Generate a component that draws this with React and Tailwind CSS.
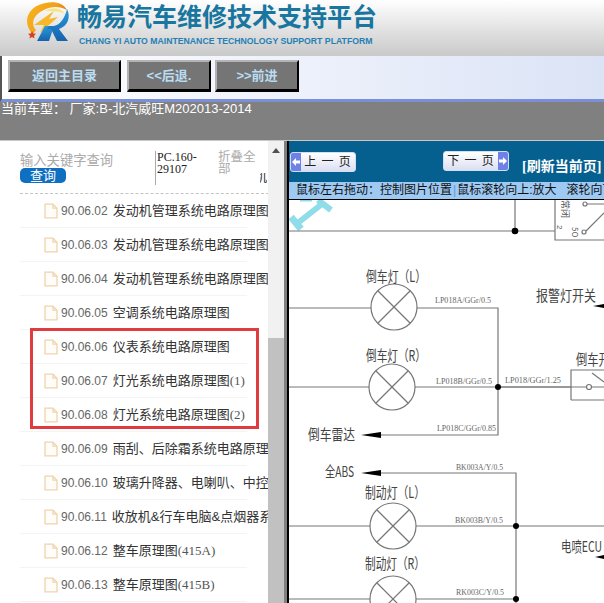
import React from 'react'

const cjk = 'font-["Liberation_Sans","Noto_Sans_CJK_SC",sans-serif]'

const rows = [
  ['90.06.02', '发动机管理系统电路原理图'],
  ['90.06.03', '发动机管理系统电路原理图'],
  ['90.06.04', '发动机管理系统电路原理图'],
  ['90.06.05', '空调系统电路原理图'],
  ['90.06.06', '仪表系统电路原理图'],
  ['90.06.07', '灯光系统电路原理图', '(1)'],
  ['90.06.08', '灯光系统电路原理图', '(2)'],
  ['90.06.09', '雨刮、后除霜系统电路原理图'],
  ['90.06.10', '玻璃升降器、电喇叭、中控锁系统'],
  ['90.06.11', '收放机&行车电脑&点烟器系统'],
  ['90.06.12', '整车原理图', '(415A)'],
  ['90.06.13', '整车原理图', '(415B)'],
]

function FileIcon() {
  return (
    <svg width="14" height="16" viewBox="0 0 14 16" className="shrink-0" fill="#fffdf9" stroke="#f0d3ac" strokeWidth="1.3">
      <path d="M1 1.2h8l4 4v9.6H1z" />
      <path d="M9 1.2v4h4" fill="none" />
    </svg>
  )
}

function Logo() {
  return (
    <svg width="46" height="42" viewBox="0 0 46 42" className="shrink-0">
      <defs>
        <linearGradient id="ring" x1="0" y1="0.2" x2="1" y2="0.6">
          <stop offset="0" stopColor="#f5b21e" />
          <stop offset="0.6" stopColor="#f3a019" />
          <stop offset="1" stopColor="#e2660f" />
        </linearGradient>
        <linearGradient id="arm" x1="0" y1="0" x2="0" y2="1">
          <stop offset="0" stopColor="#2a9bdc" />
          <stop offset="1" stopColor="#1562ad" />
        </linearGradient>
      </defs>
      <path d="M8 32C-2 23 1 8 14 3 26-2 38 0 42 8 35 4 25 4 17 9 9 13 5 22 11 28z" fill="url(#ring)" />
      <path d="M9 23 29 9 24 17 33 15 15 31 19 23z" fill="#f7b92a" />
      <path d="M20 9C28 5 36 6 40 12 35 9 27 9 20 9z" fill="#fbe27c" />
      <path d="M7 29l1.200 2.500 2.800.3-2 1.900.5 2.800-2.500-1.400-2.500 1.400.5-2.800-2-1.900 2.800-.3z" fill="#d8401f" />
      <path d="M12 39 20 24H29L24 39z" fill="url(#arm)" />
      <path d="M42 7C46 15 43 24 34 27L43 39H32L26 27H22L24 24H29C35 23 40 16 42 7z" fill="url(#arm)" />
    </svg>
  )
}

function Lamp({ x, y }) {
  const d = 16
  return (
    <g>
      <circle cx={x} cy={y} r="23" fill="#fff" />
      <line x1={x - d} y1={y - d} x2={x + d} y2={y + d} />
      <line x1={x - d} y1={y + d} x2={x + d} y2={y - d} />
    </g>
  )
}

function Label({ x, y, w, size = 15, children }) {
  return (
    <text x={x} y={y} textLength={w} lengthAdjust="spacingAndGlyphs" fontSize={size} fill="#444" stroke="none" fontFamily="'Noto Sans CJK SC', sans-serif">
      {children}
    </text>
  )
}

function Wire({ x, y, w, children }) {
  return (
    <text x={x} y={y} textLength={w} lengthAdjust="spacingAndGlyphs" fontSize="9" fill="#666" stroke="none" fontFamily="'Liberation Serif', serif">
      {children}
    </text>
  )
}

function Diagram() {
  return (
    <svg viewBox="289 199 315 404" className="block w-[315px] h-[404px]" fill="none" stroke="#777" strokeWidth="1.200">
      {/* cyan part of the drawing that is cut by the top edge */}
      <g stroke="#8fdde8" strokeWidth="6">
        <path d="M291 216 301 228" strokeWidth="7" />
        <path d="M299 221 322 203" />
        <path d="M318 199 331 209" />
        <path d="M300 199H312" strokeWidth="3" />
      </g>
      <path d="M289 230H555M515 199V230" />
      <path d="M555 199V239H604" />
      <circle cx="515" cy="230" r="3.300" fill="#000" stroke="none" />
      <circle cx="585" cy="203" r="2" fill="#fff" />
      <circle cx="584" cy="231" r="2" fill="#fff" />
      <path d="M586 230 604 212M587 203H604" />
      <text transform="translate(562 199) rotate(90)" fontSize="9" fill="#555" stroke="none" fontFamily="'Noto Sans CJK SC', sans-serif">常闭</text>
      <text transform="translate(572 226) rotate(90)" fontSize="8" fill="#555" stroke="none" fontFamily="'Noto Sans CJK SC', sans-serif">5O</text>
      <text transform="translate(557 224) rotate(90)" fontSize="8" fill="#555" stroke="none">2</text>

      <path d="M289 307H371M417 307H498V434H381M498 386H571" />
      <path d="M289 386H369M415 386H586M589 386H604" />
      <Lamp x={394} y={306} />
      <Lamp x={392} y={386} />
      <path d="M571 399V369H604M571 399H604" />
      <circle cx="589" cy="386" r="2.500" fill="#fff" />
      <path d="M592 372 604 381" />
      <circle cx="498" cy="386" r="3" fill="#000" stroke="none" />
      <path d="M361 434 381 431V437z" fill="#000" stroke="none" />
      <path d="M593 305 604 303V307z" fill="#000" stroke="none" />

      <Label x={366} y={281} w={60}>倒车灯（L）</Label>
      <Label x={366} y={360} w={60}>倒车灯（R）</Label>
      <Label x={308} y={439} w={47}>倒车雷达</Label>
      <Label x={536} y={300} w={60}>报警灯开关</Label>
      <Label x={576} y={364} w={45}>倒车开关</Label>
      <Wire x={435} y={302} w={56}>LP018A/GGr/0.5</Wire>
      <Wire x={436} y={383} w={56}>LP018B/GGr/0.5</Wire>
      <Wire x={505} y={382} w={56}>LP018/GGr/1.25</Wire>
      <Wire x={437} y={430} w={59}>LP018C/GGr/0.85</Wire>

      <path d="M381 472H516V603M289 525H370M416 525H604M289 598H370M416 598H516" />
      <Lamp x={393} y={525} />
      <Lamp x={393} y={598} />
      <circle cx="516" cy="525" r="3" fill="#000" stroke="none" />
      <circle cx="516" cy="598" r="3" fill="#000" stroke="none" />
      <path d="M361 472 381 469V475z" fill="#000" stroke="none" />
      <path d="M595 556 604 554V558z" fill="#000" stroke="none" />

      <Label x={325} y={476} w={29}>全ABS</Label>
      <Label x={365} y={497} w={60}>制动灯（L）</Label>
      <Label x={365} y={568} w={60}>制动灯（R）</Label>
      <Label x={561} y={551} w={41}>电喷ECU</Label>
      <Wire x={456} y={469} w={47}>BK003A/Y/0.5</Wire>
      <Wire x={455} y={522} w={48}>BK003B/Y/0.5</Wire>
      <Wire x={456} y={594} w={48}>RK003C/Y/0.5</Wire>
    </svg>
  )
}

function NavButton({ children, className }) {
  return (
    <button className={`h-8 flex items-center justify-center bg-[#757575] border-2 border-t-[#b4b4b4] border-l-[#b4b4b4] border-r-black border-b-[3px] border-b-black text-[13px] font-bold text-[#b9dcf3] ${className}`}>
      {children}
    </button>
  )
}

function PageButton({ dir, children, className }) {
  const arrow = (
    <span className="w-[10px] self-stretch bg-[#6f80e6] flex items-center justify-center">
      <svg width="8" height="8" viewBox="0 0 8 8" fill="#fff">
        {dir === 'left' ? <path d="M0 4 4 0V2.500H8V5.500H4V8z" /> : <path d="M8 4 4 0V2.500H0V5.500H4V8z" />}
      </svg>
    </span>
  )
  return (
    <button className={`w-[66px] h-5 flex items-center overflow-hidden rounded-[3px] border border-[#cfe0f6] bg-gradient-to-b from-white to-[#dcdff2] text-[12px] tracking-[1px] text-[#222] ${className}`}>
      {dir === 'left' && arrow}
      <span className="flex-1 text-center">{children}</span>
      {dir === 'right' && arrow}
    </button>
  )
}

export default function App() {
  return (
    <div className={`w-[604px] h-[603px] overflow-hidden flex flex-col bg-[#808080] ${cjk}`}>
      <div className="h-14 shrink-0 flex items-start gap-[6px] pl-[25px] pt-[2px] bg-gradient-to-b from-white to-[#c9c9c9]">
        <Logo />
        <div className="flex flex-col">
          <div className="h-[33px] text-[25px] leading-[31px] font-bold text-[#19769f] whitespace-nowrap">畅易汽车维修技术支持平台</div>
          <div className="text-[8.700px] leading-3 pl-[2px] font-bold text-[#2480b4] whitespace-nowrap">CHANG YI AUTO MAINTENANCE TECHNOLOGY SUPPORT PLATFORM</div>
        </div>
      </div>

      <div className="h-[46px] shrink-0 flex items-start gap-1 pl-2 pt-1 border-b-[3px] border-[#7b8fd6] border-l-2 border-l-[#555] bg-gradient-to-r from-white to-[#dbe3f6]">
        <NavButton className="w-[113px] ml-[-2px]">返回主目录</NavButton>
        <NavButton className="w-[84px] ml-[2px]">&lt;&lt;后退.</NavButton>
        <NavButton className="w-[84px]">&gt;&gt;前进</NavButton>
      </div>

      <div className="h-[38px] shrink-0 pl-px text-[13px] leading-[14px] text-white whitespace-nowrap">当前车型： 厂家:B-北汽威旺M202013-2014</div>

      <div className="flex-1 min-h-0 flex border-t border-[#c8c8c8]">
        <div className="relative w-[268px] shrink-0 bg-white overflow-hidden">
          <div className="h-[53px] ml-5 mr-[-6px] flex items-start border-b border-dashed border-[#c4c4c4]">
            <div className="w-[135px] pt-[13px]">
              <div className="text-[13.300px] leading-[14px] text-[#aaa] whitespace-nowrap">输入关键字查询</div>
              <div className="w-[46px] h-[15px] rounded-[5px] bg-[#0f6fc0] text-white text-[13px] leading-[15px] text-center">查询</div>
            </div>
            <div className="w-[63px] h-[34px] mt-[10px] pl-px border-l border-[#aaa] text-[12px] leading-[11.500px] text-[#222] font-['Liberation_Serif','Noto_Sans_CJK_SC',serif]">
              <div className="pt-px">PC.160-</div>
              <div>29107</div>
            </div>
            <div className="w-[40px] pt-[10px] text-[12.500px] leading-3 text-[#aaa]">折叠全部</div>
            <div className="w-[7px] h-[10px] mt-[32px] ml-[2px] overflow-hidden text-[12px] leading-[10px] text-[#222] [direction:rtl]">机</div>
          </div>

          {rows.map(([code, name, suffix]) => (
            <div key={code} className="h-[34px] w-[227px] ml-5 pl-6 flex items-center border-b border-[#f4f4f4] whitespace-nowrap text-[13px]">
              <FileIcon />
              <span className="ml-[3px] text-[12px] text-[#666]">{code}</span>
              <span className="ml-[5px] text-[#333]">{name}</span>
              {suffix && <span className="text-[#555] font-['Liberation_Serif',serif]">{suffix}</span>}
            </div>
          ))}

          <div className="absolute left-[30px] top-[187px] w-[229px] h-[101px] border-[3px] border-[#e03c40]" />
        </div>

        <div className="w-4 shrink-0 flex flex-col bg-[#f1f1f1]">
          <div className="h-[197px] pt-[7px] flex justify-center">
            <div className="w-0 h-0 border-x-[4px] border-x-transparent border-b-[5px] border-b-[#505050]" />
          </div>
          <div className="flex-1 bg-[#c1c1c1]" />
        </div>

        <div className="w-[3px] shrink-0 bg-[#808080]" />

        <div className="flex-1 min-w-0 flex flex-col border-l-2 border-black">
          <div className="h-[41px] shrink-0 flex items-start bg-[#05608f]">
            <PageButton dir="left" className="mt-[11px] ml-px">上 一 页</PageButton>
            <PageButton dir="right" className="mt-[10px] ml-[87px]">下 一 页</PageButton>
            <div className="mt-[17px] ml-[13px] text-[14px] leading-[17px] font-bold text-white whitespace-nowrap font-['Liberation_Serif','Noto_Sans_CJK_SC',serif]">[刷新当前页]</div>
          </div>
          <div className="h-[18px] shrink-0 pl-[7px] bg-[#9dc9f3] border-b border-black text-[12px] leading-[17px] text-[#111] whitespace-nowrap overflow-hidden">
            鼠标左右拖动：控制图片位置<span className="text-[#5a9ad8] mx-px">|</span>鼠标滚轮向上:放大&nbsp;&nbsp;&nbsp;滚轮向下:缩小
          </div>
          <div className="flex-1 min-h-0 bg-white overflow-hidden">
            <Diagram />
          </div>
        </div>
      </div>
    </div>
  )
}
